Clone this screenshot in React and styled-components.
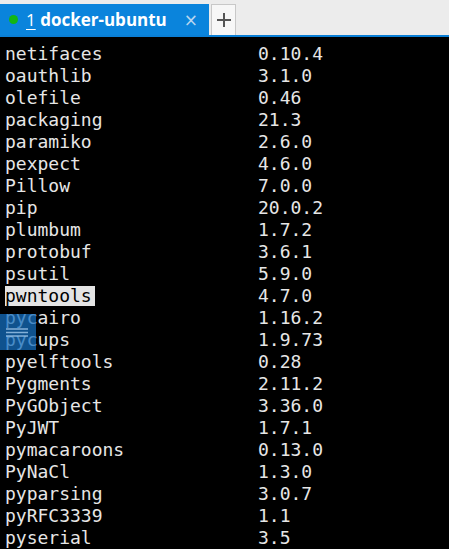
import styled, { createGlobalStyle } from 'styled-components'

const GlobalStyle = createGlobalStyle`
  html, body {
    margin: 0;
    padding: 0;
    background: #000;
  }
  body {
    width: 449px;
    height: 549px;
    overflow: hidden;
  }
`;

const packages = [
  ['netifaces', '0.10.4'],
  ['oauthlib', '3.1.0'],
  ['olefile', '0.46'],
  ['packaging', '21.3'],
  ['paramiko', '2.6.0'],
  ['pexpect', '4.6.0'],
  ['Pillow', '7.0.0'],
  ['pip', '20.0.2'],
  ['plumbum', '1.7.2'],
  ['protobuf', '3.6.1'],
  ['psutil', '5.9.0'],
  ['pwntools', '4.7.0', true],
  ['pycairo', '1.16.2'],
  ['pycups', '1.9.73'],
  ['pyelftools', '0.28'],
  ['Pygments', '2.11.2'],
  ['PyGObject', '3.36.0'],
  ['PyJWT', '1.7.1'],
  ['pymacaroons', '0.13.0'],
  ['PyNaCl', '1.3.0'],
  ['pyparsing', '3.0.7'],
  ['pyRFC3339', '1.1'],
  ['pyserial', '3.5'],
];

function App() {
  return (
    <>
      <GlobalStyle />
      <Window>
        <TabBar>
          <Tab>
            <Dot />
            <TabTitle><u>1</u> docker-ubuntu</TabTitle>
            <Close>×</Close>
          </Tab>
          <NewTab>
            <svg width="14" height="14" viewBox="0 0 14 14">
              <path d="M7 0v14M0 7h14" stroke="#555" strokeWidth="2" />
            </svg>
          </NewTab>
        </TabBar>
        <Terminal>
          {packages.map(([name, ver, sel]) => (
            <Row key={name}>
              <Name $selected={sel}>{name}</Name>
              <span>{ver}</span>
            </Row>
          ))}
          <Handle>
            <svg width="36" height="36" viewBox="0 0 36 36">
              <path d="M6 15h22M6 18.5h22M6 22h22" stroke="rgba(160,200,235,0.8)" strokeWidth="1.5" />
            </svg>
          </Handle>
        </Terminal>
      </Window>
    </>
  )
}

export default App

const Window = styled.div`
  width: 449px;
  height: 549px;
  display: flex;
  flex-direction: column;
  background: #000;
`;

const TabBar = styled.div`
  height: 37px;
  padding-top: 4px;
  box-sizing: border-box;
  background: #ececec;
  border-bottom: 2px solid #0a7fd6;
  display: flex;
  align-items: stretch;
  gap: 2px;
`;

const Tab = styled.div`
  width: 209px;
  background: #0a84dc;
  display: flex;
  align-items: center;
  padding: 0 0 0 9px;
  box-sizing: border-box;
`;

const Dot = styled.span`
  width: 9px;
  height: 9px;
  border-radius: 50%;
  background: #13b613;
  margin-right: 8px;
`;

const TabTitle = styled.span`
  color: #fff;
  font-family: "Open Sans", sans-serif;
  font-weight: 700;
  font-size: 17px;
  flex: 1;
  white-space: nowrap;
  u {
    font-weight: 400;
    text-underline-offset: 3px;
  }
`;

const Close = styled.span`
  color: #b9d6ef;
  font-family: "DejaVu Sans", sans-serif;
  font-size: 17px;
  margin-right: 11px;
`;

const NewTab = styled.div`
  width: 25px;
  background: #f7f7f7;
  border: 1px solid #c8c8c8;
  border-bottom: none;
  box-sizing: border-box;
  display: flex;
  align-items: center;
  justify-content: center;
`;

const Terminal = styled.div`
  position: relative;
  flex: 1;
  padding: 6px 0 0 5px;
  font-family: "DejaVu Sans Mono", monospace;
  font-size: 18px;
  color: #e6e6e6;
`;

const Row = styled.div`
  display: grid;
  grid-template-columns: 253px 1fr;
  height: 22px;
  line-height: 22px;
  white-space: pre;
`;

const Name = styled.span`
  justify-self: start;
  padding-right: ${p => (p.$selected ? '3px' : '0')};
  background: ${p => (p.$selected ? '#e4e4e4' : 'transparent')};
  color: ${p => (p.$selected ? '#000' : 'inherit')};
  line-height: 20px;
  align-self: center;
`;

const Handle = styled.div`
  position: absolute;
  left: 0;
  top: 277px;
  width: 36px;
  height: 36px;
  background: rgba(20, 110, 190, 0.75);
`;
